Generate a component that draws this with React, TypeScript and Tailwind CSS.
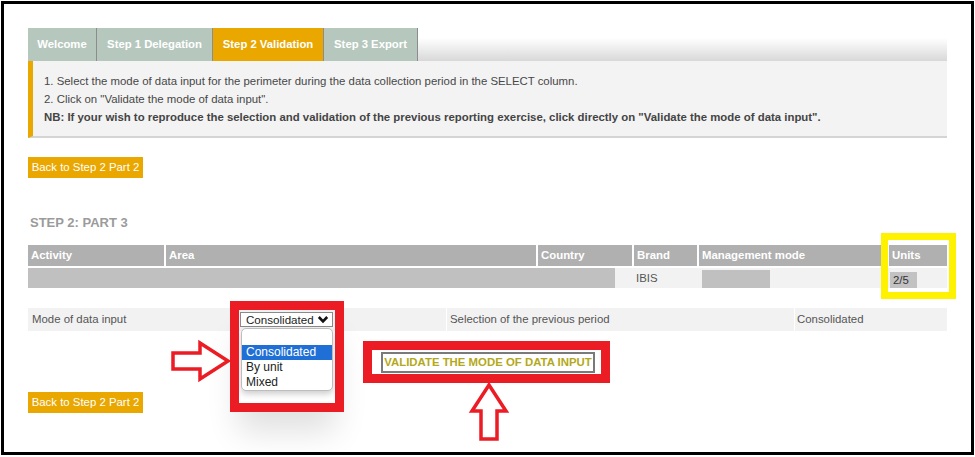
import React from 'react';

const tabs = [
  { id: 'welcome', label: 'Welcome', w: 'w-[69px]' },
  { id: 'step1', label: 'Step 1 Delegation', w: 'w-[116px]' },
  { id: 'step2', label: 'Step 2 Validation', w: 'w-[111px]' },
  { id: 'step3', label: 'Step 3 Export', w: 'w-[94px]' },
];

const headers = [
  { label: 'Activity', w: 'w-[136px]' },
  { label: 'Area', w: 'w-[370px]' },
  { label: 'Country', w: 'w-[94px]' },
  { label: 'Brand', w: 'w-[63px]' },
  { label: 'Management mode', w: 'w-[188px]' },
  { label: 'Units', w: 'w-[58px]' },
];

const BackButton: React.FC = () => (
  <button className="block h-[21px] w-[115px] bg-[#e9a700] text-white text-[11.4px] leading-[21px] text-center">
    Back to Step 2 Part 2
  </button>
);

const App: React.FC = () => {
  const activeTab = 'step2';

  return (
    <div className="relative w-[975px] h-[457px] bg-white p-px font-['Liberation_Sans',Arial,sans-serif] overflow-hidden">
      <div className="w-[973px] h-[454px] border-[3px] border-black pl-[24px] pt-[24px]">
        <div className="w-[919px] flex flex-col">
          {/* tabs */}
          <div className="flex h-[33px]">
            {tabs.map((t) => (
              <div
                key={t.id}
                className={`${t.w} h-full flex items-center justify-center border-r border-[#8c8c8c] text-white font-bold text-[11.3px] ${
                  activeTab === t.id ? 'bg-[#e9a700]' : 'bg-[#b6c8be]'
                }`}
              >
                {t.label}
              </div>
            ))}
            <div className="flex-1 h-full bg-[linear-gradient(to_bottom,#ffffff_30%,#d8d8d8)]"></div>
          </div>

          {/* instructions */}
          <div className="h-[77px] bg-[#f3f3f3] border-l-[5px] border-[#e9a700] border-b-2 border-b-[#d4d4d4] pl-[11px] pt-[11px] text-[11.4px] leading-[18px] text-[#474747]">
            <p>1. Select the mode of data input for the perimeter during the data collection period in the SELECT column.</p>
            <p>2. Click on "Validate the mode of data input".</p>
            <p className="font-bold text-[#444]">
              NB: If your wish to reproduce the selection and validation of the previous reporting exercise, click directly on "Validate the mode of data input".
            </p>
          </div>

          <div className="mt-[19px] flex">
            <BackButton />
          </div>

          <h2 className="mt-[37px] text-[13px] leading-[16px] font-bold text-[#9b9b9b] pl-[2px]">STEP 2: PART 3</h2>

          {/* table */}
          <div className="mt-[14px] flex flex-col gap-[2px]">
            <div className="flex gap-[2px] h-[21px]">
              {headers.map((h) => (
                <div key={h.label} className={`${h.w} bg-[#b0b0b0] text-white font-bold text-[11.4px] leading-[21px] pl-[3px]`}>
                  {h.label}
                </div>
              ))}
            </div>
            <div className="flex h-[20px] bg-[#f2f2f2] text-[11.4px] text-[#555]">
              <div className="w-[587px] bg-[#c0c0c0]"></div>
              <div className="w-[19px]"></div>
              <div className="w-[65px] leading-[20px] pl-[2px]">IBIS</div>
              <div className="w-[190px] flex items-stretch pl-[3px]">
                <div className="w-[68px] bg-[#c0c0c0] mt-[2px]"></div>
              </div>
              <div className="flex-1 pl-[1px] flex items-end">
                <div className="w-[27px] h-[16px] bg-[#c2c2c2] text-[#333] text-[11.4px] leading-[16px] pl-[3px]">2/5</div>
              </div>
            </div>
          </div>

          {/* mode of data input */}
          <div className="mt-[20px] flex gap-px h-[23px] text-[11.4px] text-[#555] leading-[23px]">
            <div className="w-[418px] bg-[#f2f2f2] flex items-center">
              <span className="w-[212px] pl-[4px]">Mode of data input</span>
              <div className="w-[93px] h-[15px] border border-[#8a8a8a] bg-white flex items-center justify-between pl-[5px] pr-[3px] text-[11.6px] text-[#222] leading-[13px]">
                <span>Consolidated</span>
                <svg width="12" height="9" viewBox="0 0 12 9">
                  <polyline points="1.8,2 6,6.3 10.2,2" fill="none" stroke="#111" strokeWidth="2.6" />
                </svg>
              </div>
            </div>
            <div className="w-[347px] bg-[#f2f2f2] pl-[3px]">Selection of the previous period</div>
            <div className="flex-1 bg-[#f2f2f2] pl-[2px]">Consolidated</div>
          </div>

          <div className="mt-[21px] pl-[353px] flex">
            <button className="block h-[21px] w-[214px] border-2 border-[#7a7a7a] bg-white text-[11.4px] font-bold text-[#b3a81a] leading-[17px]">
              VALIDATE THE MODE OF DATA INPUT
            </button>
          </div>

          <div className="mt-[19px] flex">
            <BackButton />
          </div>
        </div>
      </div>

      {/* open dropdown list */}
      <div className="absolute left-[241px] top-[328px] w-[92px] h-[63px] bg-white border border-[#bdbdbd] rounded-[5px] shadow-[0_3px_6px_rgba(0,0,0,0.2)] text-[12px] text-[#222] leading-[15px] pt-[16px]">
        <div className="bg-[#1f6fd6] text-white pl-[4px]">Consolidated</div>
        <div className="pl-[4px]">By unit</div>
        <div className="pl-[4px]">Mixed</div>
      </div>

      {/* annotations */}
      <div className="absolute left-[230px] top-[301px] w-[114px] h-[111px] border-[9px] border-[#ec1c24] shadow-[0_28px_30px_-8px_rgba(0,0,0,0.12)]"></div>
      <div className="absolute left-[363px] top-[341px] w-[247px] h-[42px] border-[9px] border-[#ec1c24]"></div>
      <div className="absolute left-[881px] top-[233px] w-[75px] h-[66px] border-[7px] border-[#fff200]"></div>

      <svg className="absolute left-0 top-0" width="975" height="457" viewBox="0 0 975 457">
        <polygon
          points="173,353 200,353 200,343 228,361 200,379 200,369 173,369"
          fill="white"
          stroke="#ec1c24"
          strokeWidth="3.5"
          strokeLinejoin="miter"
        />
        <polygon
          points="489,385 506,411 497,411 497,439 481,439 481,411 472,411"
          fill="white"
          stroke="#ec1c24"
          strokeWidth="3.5"
          strokeLinejoin="miter"
        />
      </svg>
    </div>
  );
};

export default App;
